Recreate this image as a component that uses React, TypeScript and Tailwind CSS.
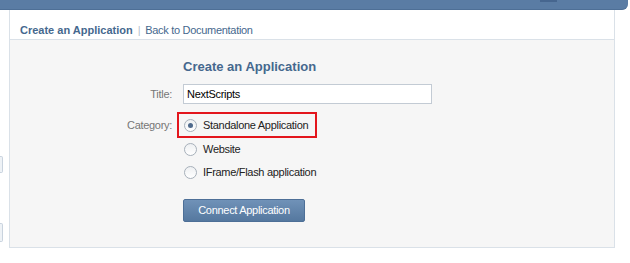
const Radio = ({ checked }: { checked?: boolean }) => (
  <span className="w-[13px] h-[13px] rounded-full border border-[#a7b0ba] bg-gradient-to-b from-[#eef0f2] to-white flex items-center justify-center shrink-0">
    {checked && <span className="w-[5px] h-[5px] rounded-full bg-[#4f6a8c]" />}
  </span>
);

const App = () => {
  return (
    <div className="w-[630px] h-[263px] bg-white overflow-hidden flex flex-col font-['Liberation_Sans',Arial,sans-serif] text-[11px] leading-[13px] tracking-[-0.3px]">
      {/* top bar */}
      <div className="h-[10px] w-[628px] bg-[#5a7ca4] rounded-br-[6px] border-b border-[#4e6f96] flex">
        <div className="ml-[540px] w-[17px] h-[2px] bg-[#46668f]" />
      </div>

      <div className="flex">
        {/* left edge remnants */}
        <div className="w-[9px] flex flex-col">
          <div className="mt-[146px] w-[3px] h-[17px] border border-l-0 border-[#c9d3de] bg-[#eef2f6] rounded-r-[2px]" />
          <div className="mt-[50px] w-[3px] h-[19px] border border-l-0 border-[#c9d3de] bg-[#eef2f6] rounded-r-[2px]" />
        </div>

        <div className="w-[606px] border-x border-b border-[#dae1e8]">
          {/* header */}
          <div className="h-[30px] bg-white border-b border-[#dae1e8] pl-[10px] pt-[14px] flex items-start">
            <span className="font-bold text-[#45688e] tracking-normal">Create an Application</span>
            <span className="text-[#b5c0cc] mx-[5px]">|</span>
            <span className="text-[#45688e]">Back to Documentation</span>
          </div>

          {/* body */}
          <div className="h-[207px] bg-[#f6f6f6] pt-[19px] flex flex-col">
            <div className="flex gap-[11px]">
              <div className="w-[162px]" />
              <h2 className="text-[13px] leading-[16px] font-bold text-[#45688e] tracking-normal">Create an Application</h2>
            </div>

            <div className="flex gap-[11px] items-center mt-[9px]">
              <label className="w-[162px] text-right text-[#777]">Title:</label>
              <div className="w-[249px] h-[20px] border border-[#c3cbd4] bg-white px-[3px] flex items-center text-black">
                NextScripts
              </div>
            </div>

            <div className="flex gap-[11px] mt-[8px]">
              <label className="w-[162px] text-right text-[#777] pt-[7px]">Category:</label>
              <div className="flex flex-col">
                <div className="ml-[-6px] w-[140px] h-[26px] border-2 border-[#e3161d] pl-[5px] flex items-center gap-[6px] text-[#222]">
                  <Radio checked />
                  <span>Standalone Application</span>
                </div>
                <div className="h-[23px] pl-[1px] flex items-center gap-[6px] text-[#222]">
                  <Radio />
                  <span>Website</span>
                </div>
                <div className="h-[23px] pl-[1px] flex items-center gap-[6px] text-[#222]">
                  <Radio />
                  <span>IFrame/Flash application</span>
                </div>
              </div>
            </div>

            <div className="flex gap-[11px] mt-[15px]">
              <div className="w-[162px]" />
              <button className="w-[122px] h-[23px] rounded-[2px] border border-[#4d6f97] bg-gradient-to-b from-[#7092b8] to-[#55789f] text-white flex items-center justify-center">
                Connect Application
              </button>
            </div>
          </div>
        </div>
      </div>
    </div>
  );
};

export default App;
